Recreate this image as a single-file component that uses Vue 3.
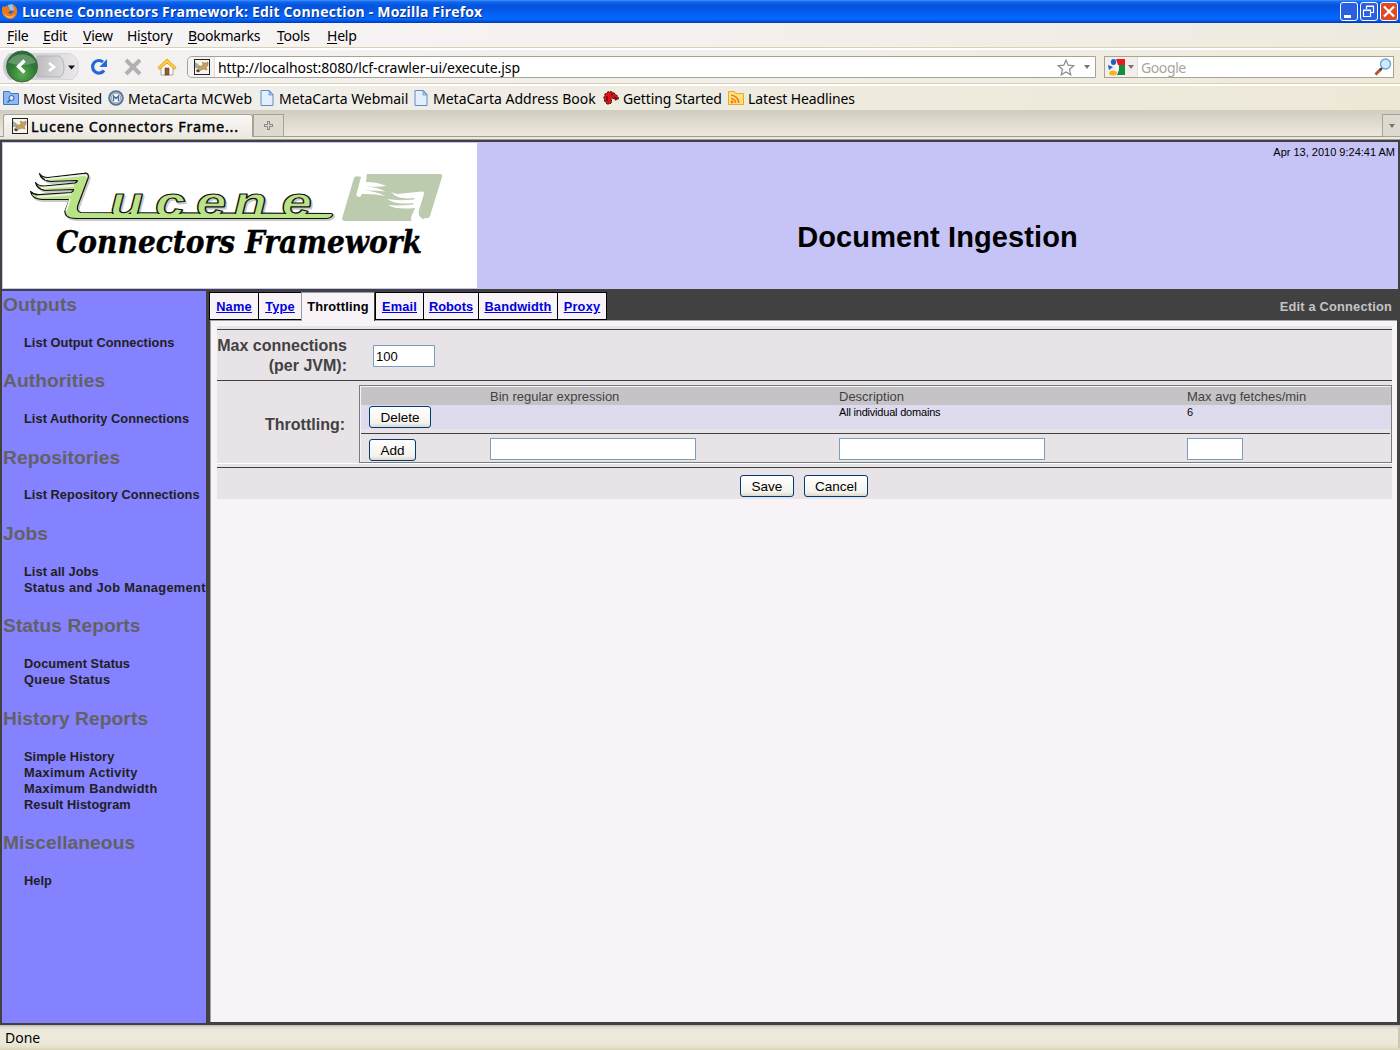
<script setup>
const menus = [
  ['', 'F', 'ile'], ['', 'E', 'dit'], ['', 'V', 'iew'], ['Hi', 's', 'tory'],
  ['', 'B', 'ookmarks'], ['', 'T', 'ools'], ['', 'H', 'elp'],
]
const sections = [
  { title: 'Outputs', links: ['List Output Connections'] },
  { title: 'Authorities', links: ['List Authority Connections'] },
  { title: 'Repositories', links: ['List Repository Connections'] },
  { title: 'Jobs', links: ['List all Jobs', 'Status and Job Management'] },
  { title: 'Status Reports', links: ['Document Status', 'Queue Status'] },
  { title: 'History Reports', links: ['Simple History', 'Maximum Activity', 'Maximum Bandwidth', 'Result Histogram'] },
  { title: 'Miscellaneous', links: ['Help'] },
]
const loose = ['Status and Job Management', 'Queue Status', 'Maximum Activity', 'Maximum Bandwidth']
const tabs = ['Name', 'Type', 'Throttling', 'Email', 'Robots', 'Bandwidth', 'Proxy']
</script>

<template>
  <div class="window">
    <header class="titlebar">
      <svg class="fx" width="16" height="18" viewBox="0 0 16 18">
        <circle cx="8" cy="9" r="7" fill="#2b62b8" />
        <path d="M6 3l4-1 4 4-3 3-4-1z" fill="#8cc6f4" />
        <path d="M1 4l2 1 2-2 1 3 3 2-3 3c3 2 6 0 6-4l-2-5c4 2 6 5 5 9-1 4-4 6-7 6C3 16 0 13 0 9c0-2 0-4 1-5z" fill="#ec7a1c" />
        <path d="M2 11c2 4 7 5 11 1-2 5-9 6-11-1z" fill="#ffc23c" />
      </svg>
      <span class="wtitle">Lucene Connectors Framework: Edit Connection - Mozilla Firefox</span>
      <div class="wbtns">
        <svg width="18" height="19" viewBox="0 0 18 19"><rect x=".5" y=".5" width="17" height="18" rx="2.5" fill="#2a5fe0" stroke="#fff" /><path d="M4 13h7v3H4z" fill="#fff" /></svg>
        <svg width="18" height="19" viewBox="0 0 18 19"><rect x=".5" y=".5" width="17" height="18" rx="2.5" fill="#2a5fe0" stroke="#fff" /><path d="M6.500 7V4.500h7v6H11M6 4h8M3.500 8.500h7v6h-7zM3 8h8" fill="none" stroke="#fff" stroke-width="1.200" /></svg>
        <svg width="18" height="19" viewBox="0 0 18 19"><rect x=".5" y=".5" width="17" height="18" rx="2.5" fill="#dc4a26" stroke="#fff" /><path d="M4 4.500l10 10M14 4.500l-10 10" stroke="#fff" stroke-width="2.200" /></svg>
      </div>
    </header>

    <nav class="menubar">
      <span v-for="(m, i) in menus" :key="i" class="menu">{{ m[0] }}<u>{{ m[1] }}</u>{{ m[2] }}</span>
    </nav>

    <div class="navbar">
      <svg class="backfwd" width="78" height="34" viewBox="0 0 78 34">
        <defs>
          <radialGradient id="gb" cx=".5" cy=".75" r=".7"><stop offset="0" stop-color="#58b04e" /><stop offset=".6" stop-color="#2f7a36" /><stop offset="1" stop-color="#2c6a38" /></radialGradient>
          <linearGradient id="gf" x2="1"><stop offset="0" stop-color="#bdbdbf" /><stop offset="1" stop-color="#dcdbde" /></linearGradient>
          <linearGradient id="gp" x2="1"><stop offset="0" stop-color="#c9c8cb" /><stop offset=".7" stop-color="#dddbdf" /><stop offset="1" stop-color="#ebe8ec" /></linearGradient>
        </defs>
        <path d="M8 3.500h61q5 2 8 8v10q-2 6-6 8H8q-6-6-6-13t6-13z" fill="url(#gp)" stroke="#d6d4d8" />
        <path d="M36 6h22q5 3 5 11t-4 10H36z" fill="url(#gf)" stroke="#b4b3b6" />
        <path d="M48 13l5 4-5 4" fill="none" stroke="#fff" stroke-width="2.500" />
        <circle cx="21" cy="16.500" r="15.500" fill="url(#gb)" stroke="#47634a" />
        <path d="M7 12.500a15 13 0 0 1 28 0Q21 17.500 7 12.500z" fill="#fff" opacity=".25" />
        <path d="M23.500 10.500l-6 6 6 6" fill="none" stroke="#fff" stroke-width="3.400" />
        <path d="M67 15.500h7l-3.500 4z" fill="#111" />
      </svg>
      <svg class="reload" width="18" height="18" viewBox="0 0 18 18"><path d="M14 12.500A6.300 6.300 0 1 1 13 4" fill="none" stroke="#2468dc" stroke-width="3.200" /><path d="M17 1v8H9.500z" fill="#2468dc" /></svg>
      <svg class="stop" width="18" height="18" viewBox="0 0 18 18"><path d="M2 2l14 14M16 2L2 16" stroke="#b1b1b1" stroke-width="4" /></svg>
      <svg class="home" width="20" height="18" viewBox="0 0 20 18">
        <path d="M4 9v8h12V9l-6-6z" fill="#fdfdfd" stroke="#a8a8a8" />
        <path d="M8 10h4v7H8z" fill="#9a5a26" stroke="#5f4020" stroke-width=".6" />
        <path d="M10 1L1 9.500l1.500 1.800L10 5l7.500 6.300L19 9.500z" fill="#ffcf3f" stroke="#e0a01e" />
      </svg>
      <div class="url">
        <span class="favbox">
          <svg width="16" height="16" viewBox="0 0 16 16"><rect x=".5" y=".5" width="15" height="15" fill="#f7f4ec" stroke="#222" /><path d="M1 3l3 2 4 4H1z" fill="#6c7a68" opacity=".6" /><path d="M2.500 12.500c1.500-4 3.500-6 6.500-6L8.500 3l1.500 1h2l2-1v3.500l-2 1.500 1 3-3-1-3 1-2 1.500z" fill="#c9a060" stroke="#8a6c38" stroke-width=".5" /><path d="M2 11l2-.5 2 1.500-2 1.500z" fill="#444" /></svg>
        </span>
        <span class="urltext">http://localhost:8080/lcf-crawler-ui/execute.jsp</span>
        <svg class="star" width="18" height="17" viewBox="0 0 18 17"><path d="M9 1.200l2.200 5 5.500.5-4.200 3.600 1.300 5.500L9 12.900l-4.800 2.900 1.300-5.500L1.300 6.700l5.500-.5z" fill="#fff" stroke="#8a8a8a" stroke-width="1.200" /></svg>
        <i class="arrow"></i>
      </div>
      <div class="search">
        <span class="engine">
          <svg width="17" height="17" viewBox="0 0 17 17">
            <path d="M8 0h9v6h-7z" fill="#e8191c" /><path d="M11 6h6v10H9l2-5z" fill="#0f8f3c" />
            <ellipse cx="5.500" cy="3" rx="2.600" ry="3" fill="#1d5fc4" /><path d="M0 6l5 2-4 3z" fill="#1d5fc4" />
            <path d="M7 6l3 4-3 2" fill="none" stroke="#fff" stroke-width="1.500" /><ellipse cx="5" cy="14" rx="3.800" ry="2.500" fill="#f4b41a" />
          </svg>
          <i class="arrow"></i>
        </span>
        <span class="ph">Google</span>
        <svg class="mag" width="18" height="18" viewBox="0 0 18 18"><path d="M1.500 16.500L7 11" stroke="#b0562a" stroke-width="3" /><path d="M6 12l2.500-2.500" stroke="#333" stroke-width="2" /><circle cx="11.500" cy="6" r="5" fill="#cfeafc" stroke="#6f9fd2" stroke-width="1.400" /></svg>
      </div>
    </div>

    <div class="bookmarks">
      <span class="bm b1">
        <svg width="16" height="16" viewBox="0 0 16 16"><path d="M.5 14.500v-13h6l1 2h8v11z" fill="#8fbaf0" stroke="#3f76c8" /><circle cx="8.500" cy="8" r="2.500" fill="#d8ebff" stroke="#2b5cb0" /><path d="M4.500 12.500l2.500-2.500" stroke="#2b5cb0" stroke-width="1.500" /></svg>
        <span>Most Visited</span>
      </span>
      <span class="bm b2">
        <svg width="16" height="16" viewBox="0 0 16 16"><circle cx="8" cy="8" r="6.800" fill="#e8eef4" stroke="#54779c" stroke-width="2" /><circle cx="8" cy="8" r="4.800" fill="#f8f8f8" stroke="#9c9c9c" /><path d="M5.500 11V6l2.500 2.500L10.500 6v5" fill="none" stroke="#4c6c94" stroke-width="1.400" /></svg>
        <span>MetaCarta MCWeb</span>
      </span>
      <span class="bm b3">
        <svg width="14" height="16" viewBox="0 0 14 16"><path d="M1 .5h8.500l3.500 4v11H1z" fill="#e2effc" stroke="#5c8cc8" /><path d="M9 1v4h4z" fill="#aacbf2" stroke="#5c8cc8" stroke-width=".7" /></svg>
        <span>MetaCarta Webmail</span>
      </span>
      <span class="bm b4">
        <svg width="14" height="16" viewBox="0 0 14 16"><path d="M1 .5h8.500l3.500 4v11H1z" fill="#e2effc" stroke="#5c8cc8" /><path d="M9 1v4h4z" fill="#aacbf2" stroke="#5c8cc8" stroke-width=".7" /></svg>
        <span>MetaCarta Address Book</span>
      </span>
      <span class="bm b5">
        <svg width="16" height="16" viewBox="0 0 16 16"><path d="M4.500 14L2 12 .8 8 2 4l3.500-2.500 4 .5L13 4.500l2.500 3-.5 2-3 .5-2-2-2 1 1 3-2 2z" fill="#d6151b" stroke="#1a0505" stroke-dasharray="2 1.500" /><path d="M8 4l2 1M11 7.500l3 .5M4 6v5" stroke="#300" /></svg>
        <span>Getting Started</span>
      </span>
      <span class="bm b6">
        <svg width="16" height="16" viewBox="0 0 16 16"><path d="M.5 14.500v-13h6l1 2h8v11z" fill="#ffe07a" stroke="#e2aa30" /><circle cx="4" cy="12" r="1.400" fill="#ea7a1c" /><path d="M3 8.500a4.500 4.500 0 0 1 4.500 4.500M3 5.200A7.800 7.800 0 0 1 10.800 13" fill="none" stroke="#ea7a1c" stroke-width="1.600" /></svg>
        <span>Latest Headlines</span>
      </span>
    </div>

    <div class="tabstrip">
      <div class="btab">
        <svg width="16" height="16" viewBox="0 0 16 16"><rect x=".5" y=".5" width="15" height="15" fill="#f7f4ec" stroke="#222" /><path d="M1 3l3 2 4 4H1z" fill="#6c7a68" opacity=".6" /><path d="M2.500 12.500c1.500-4 3.500-6 6.500-6L8.500 3l1.500 1h2l2-1v3.500l-2 1.500 1 3-3-1-3 1-2 1.500z" fill="#c9a060" stroke="#8a6c38" stroke-width=".5" /><path d="M2 11l2-.5 2 1.500-2 1.500z" fill="#444" /></svg>
        <span>Lucene Connectors Frame...</span>
      </div>
      <div class="newtab"><svg width="9" height="9" viewBox="0 0 9 9"><path d="M4.500 0v9M0 4.500h9" stroke="#8b8a86" stroke-width="3" /><path d="M4.500 1v7M1 4.500h7" stroke="#dedbd4" /></svg></div>
      <div class="alltabs"><i class="arrow"></i></div>
    </div>

    <main class="page">
      <div class="banner">
        <svg class="logo" width="474" height="145" viewBox="3 143 474 145">
          <defs>
            <path id="wing" d="M39.500 173.500Q42 177.500 48 177.500L84 173.300Q89.500 172.500 88 178.500L78 205Q76 211.500 81 212.500L331 213.500Q334 214 332 216Q330 218.500 326 218.500H76Q64 218 65 211L69.500 199.500H42Q32 199 30.500 191.500Q34 195 39 194.700L71 192.500Q74 191 73.500 189.500L45 190.500Q37 189 35.500 182.500Q38 186 44 186L75 183Q78 181.500 77 180.500L50 181.500Q41 180 39.500 173.500Z" />
          </defs>
          <g stroke-linejoin="round">
            <use href="#wing" x="1.500" y="1.800" fill="#c9c9c9" stroke="#c9c9c9" stroke-width="1.500" />
            <text class="word shade" transform="translate(1.500 1.500) scale(1.3 1)" x="84.600 119.200 150.800 179.600 216.500" y="217.500">ucene</text>
            <use href="#wing" fill="#b9e387" stroke="#111" stroke-width="1.200" />
            <path d="M45 179.400l39-4.200q3-.4 2.500 2M41 188l33-2.500M37 196.800l34-2.500M70 199l-4 12" fill="none" stroke="#f2f2ee" stroke-width="1.800" />
            <text class="word" transform="scale(1.3 1)" x="84.600 119.200 150.800 179.600 216.500" y="217.500">ucene</text>
            <path d="M84 214.100h245l-2 3.800H84z" fill="#b9e387" />
          </g>
          <text class="sub" x="56" y="253" textLength="366" lengthAdjust="spacingAndGlyphs">Connectors Framework</text>
          <path d="M361 174H440Q442.500 174 442 177L430 216Q429 219 425 218L419 221H345Q341 221 342.500 217L354 178Q355 175 361 177Z" fill="#bccaad" />
          <path d="M361 173H367L366 182Q378 182 386 186Q380 187 365 186.500Q378 187 385 191.500Q376 190 364 190.500Q376 191 385 196Q374 193.500 362 194L360 197Q356 197 356.500 194L361 177Z" fill="#fff" />
          <path d="M391 191.500Q394 195 402 193.500L422 191.500Q424.500 192 424 194L419 210Q418 216 421 217.500L426 222H412Q410 219 411.500 216L415 208Q396 210 388 205Q398 206 413 204.500L413.500 203Q396 205 387 199Q398 201 414 199.500L414.500 198Q396 200 391 191.500Z" fill="#fff" />
        </svg>
        <div class="bannertext">
          <div class="date">Apr 13, 2010 9:24:41 AM</div>
          <h1>Document Ingestion</h1>
        </div>
      </div>
      <div class="body">
        <aside class="side">
          <section v-for="s in sections" :key="s.title">
            <h2>{{ s.title }}</h2>
            <a v-for="l in s.links" :key="l" :class="{ loose: loose.includes(l) }">{{ l }}</a>
          </section>
        </aside>
        <div class="content">
          <div class="tabrow">
            <div v-for="t in tabs" :key="t" class="tab" :class="['t-' + t.toLowerCase(), { active: t === 'Throttling' }]"><span>{{ t }}</span></div>
            <div class="where">Edit a Connection</div>
          </div>
          <div class="panel">
            <div class="form">
              <div class="row r1">
                <div class="label">Max connections<br />(per JVM):</div>
                <div class="inp w100">100</div>
              </div>
              <div class="row r2">
                <div class="label lt">Throttling:</div>
                <div class="table">
                  <div class="trow thead"><span></span><span>Bin regular expression</span><span>Description</span><span>Max avg fetches/min</span></div>
                  <div class="trow item"><span><b class="btn del">Delete</b></span><span></span><span>All individual domains</span><span>6</span></div>
                  <div class="sep"></div>
                  <div class="trow add"><span><b class="btn addb">Add</b></span><span><i class="inp wide"></i></span><span><i class="inp wide"></i></span><span><i class="inp small"></i></span></div>
                </div>
              </div>
              <div class="row r3">
                <b class="btn save">Save</b>
                <b class="btn cancel">Cancel</b>
              </div>
            </div>
          </div>
        </div>
      </div>
    </main>
    <footer class="status"><span>Done</span><i></i></footer>
  </div>
</template>

<style>
body { background: #ece9d8; overflow: hidden; }
</style>

<style scoped>
* { box-sizing: border-box; }
svg { display: block; flex: none; }
.window { width: 1400px; height: 1050px; display: flex; flex-direction: column; font-family: "Noto Sans", sans-serif; color: #000; overflow: hidden; white-space: nowrap; }
.titlebar { height: 23px; flex: none; display: flex; align-items: center; padding: 0 2px 0 2px; background: linear-gradient(#3f93ff 0, #1064ec 2px, #0453dc 6px, #0462f8 15px, #0468ff 19px, #0048d0 22px, #0038b0 23px); }
.fx { margin-top: -2px; }
.wtitle { margin-left: 4px; color: #fff; font: bold 14px/23px "Open Sans", sans-serif; text-shadow: 1px 1px #0a2a80; letter-spacing: 0.18px; }
.wbtns { margin-left: auto; display: flex; gap: 2px; margin-top: -1px; }
.menubar { height: 27px; flex: none; display: grid; grid-template-columns: 36px 40px 44px 61px 89px 50px 40px; padding-left: 7px; background: linear-gradient(90deg, #f7f4f6, #f4f1ee 50%, #edeade); border-bottom: 2px solid #fff; box-shadow: inset 0 -1px #dccfb2; font-size: 14px; line-height: 25px; }
.menu { letter-spacing: -0.25px; }
.menu u { text-underline-offset: 2px; }
.navbar { height: 36px; flex: none; display: flex; align-items: center; background: linear-gradient(90deg, #f4f2f2, #f2eee8 60%, #efead8); border-bottom: 2px solid #fff; box-shadow: inset 0 -1px #dccfb2; }
.backfwd { margin-left: 1px; }
.reload { margin-left: 11px; }
.stop { margin-left: 16px; }
.home { margin-left: 15px; }
.url { margin-left: 10px; width: 909px; height: 22px; display: flex; align-items: center; background: #fff; border: 1px solid #a6a294; border-radius: 5px 0 0 5px; }
.favbox { display: flex; align-items: center; width: 27px; height: 20px; padding-left: 6px; border-right: 1px solid #ddd; background: #f5f2f3; border-radius: 5px 0 0 5px; }
.urltext { margin-left: 3px; font-size: 14px; letter-spacing: -0.07px; }
.star { margin-left: auto; }
.arrow { width: 0; height: 0; border: 3px solid transparent; border-top: 4px solid #77756f; border-bottom: 0; }
.url .arrow { margin: 0 5px 0 9px; }
.search { margin-left: 8px; width: 290px; height: 22px; display: flex; align-items: center; background: #fff; border: 1px solid #a6a294; }
.engine { width: 33px; height: 20px; padding-left: 3px; display: flex; align-items: center; gap: 3px; background: #f2eeee; border-right: 1px solid #e2e0dc; }
.ph { margin-left: 3px; font-size: 14px; color: #a8a598; letter-spacing: -0.4px; }
.mag { margin-left: auto; margin-right: 1px; }
.bookmarks { height: 24px; flex: none; display: flex; padding-left: 3px; background: linear-gradient(90deg, #f2f0ee, #eeebe0 50%, #ede8d6); font-size: 14px; line-height: 26px; letter-spacing: -0.12px; }
.bm { display: flex; align-items: flex-start; }
.bm svg { margin: 4px 4px 0 0; }
.b1 { width: 105px; }
.b2 { width: 152px; letter-spacing: 0.05px; }
.b3 { width: 154px; letter-spacing: -0.04px; }
.b4 { width: 189px; letter-spacing: 0; }
.b3 svg, .b4 svg { margin-right: 5px; }
.b5 { width: 125px; }
.tabstrip { height: 30px; flex: none; display: flex; align-items: flex-start; padding: 4px 0 0 3px; background: linear-gradient(#cfccc0 0, #ddd8cc 10px, #ebe4d8 22px, #ece6da 26px, #9e9b92 26px, #9e9b92 27px, #ece9e0 27px, #ece9e0 29px, #9e9b92 29px); }
.btab { width: 250px; height: 23px; display: flex; align-items: center; padding-left: 8px; background: linear-gradient(#faf8f6, #ece8e2); border: 1px solid #a6a294; border-bottom: 0; border-radius: 3px 3px 0 0; font-size: 14.5px; -webkit-text-stroke: 0.4px #000; letter-spacing: 0.72px; }
.btab span { margin-left: 3px; line-height: 22px; }
.newtab { width: 31px; height: 23px; display: flex; align-items: center; justify-content: center; border: 1px solid #a6a294; background: #dedad0; }
.alltabs { margin-left: auto; width: 18px; height: 23px; border: 1px solid #a6a294; border-right: 0; background: #dedad0; display: flex; align-items: center; justify-content: center; }

.page { height: 885px; flex: none; background: #424142; padding: 2px 2px 2px 2px; font-family: "Liberation Sans", sans-serif; display: flex; flex-direction: column; }
.banner { height: 147px; flex: none; display: flex; background: #c6c3f7; padding: 1px 0 1px 1px; }
.logo { background: #fff; width: 474px; height: 145px; }
.word { font: italic bold 42px "Liberation Sans", sans-serif; fill: #b9e387; stroke: #111; stroke-width: 1.1px; }
.word.shade { fill: #c9c9c9; stroke: #c9c9c9; }
.sub { font: italic bold 31px "DejaVu Serif Condensed", "DejaVu Serif", serif; fill: #000; stroke: #000; stroke-width: 0.4px; }
.bannertext { flex: 1; display: flex; flex-direction: column; }
.date { text-align: right; padding-right: 3px; font-size: 11px; line-height: 18px; }
h1 { margin: 59px 0 0; font-size: 29px; line-height: 34px; text-align: center; letter-spacing: 0.1px; }
.body { flex: 1; min-height: 0; display: flex; padding-top: 2px; }
.side { width: 204px; flex: none; background: #8482ff; padding: 3px 0 0 1px; font-weight: bold; font-size: 12.8px; line-height: 16px; overflow: hidden; }
.side section { margin-bottom: 19.55px; }
.side h2 { margin: 0 0 18.8px; font-size: 19.2px; line-height: 22px; color: #636163; letter-spacing: 0.08px; }
.side a { display: block; padding-left: 21px; color: #212021; letter-spacing: 0.05px; }
.side a.loose { letter-spacing: 0.33px; }
.content { margin-left: 3px; flex: 1; min-width: 0; display: flex; flex-direction: column; padding-bottom: 1px; }
.tabrow { height: 30px; flex: none; display: flex; padding-top: 1px; font-weight: bold; font-size: 12.8px; line-height: 27px; position: relative; z-index: 1; }
.tab { height: 28px; border: 1px solid #000; border-right: 0; background: #f7f3f7; color: #0000de; text-align: center; letter-spacing: 0.2px; }
.tab span { text-decoration: underline; }
.tab.active { height: 29px; border: 1px solid #9c9a9c; border-right: 1px solid #424142; border-bottom: 0; color: #000; line-height: 28px; }
.tab.active span { text-decoration: none; }
.t-name { width: 49px; }
.t-type { width: 43px; }
.t-throttling { width: 74px; }
.t-email { width: 48px; }
.t-robots { width: 55px; letter-spacing: 0; }
.t-bandwidth { width: 79px; }
.t-proxy { width: 50px; border-right: 1px solid #000; }
.where { margin-left: auto; padding-right: 6px; color: #c6c3c6; line-height: 29px; letter-spacing: 0.2px; }
.panel { flex: 1; margin: -1px 1px 0 1px; background: #f7f3f7; border-top: 1px solid #a5a2a5; border-left: 1px solid #a5a2a5; padding: 5px 5px 0 6px; }
.form { background: #e7e3e7; height: 173px; padding-top: 3px; }
.row { border-top: 1px solid #424142; display: flex; }
.r1 { height: 51px; align-items: flex-start; }
.label { width: 130px; margin-top: 6px; text-align: right; font-weight: bold; font-size: 16px; line-height: 20px; color: #424142; }
.label.lt { width: 128px; margin-top: 34px; }
.inp { display: block; height: 22px; border: 1px solid #7b9ebd; background: #fff; font-size: 13px; line-height: 21px; padding-left: 2px; }
.w100 { width: 62px; margin: 15px 0 0 26px; }
.r2 { height: 87px; box-shadow: inset 0 -3px #e7e3e7, inset 0 -4px #fff; }
.table { flex: none; margin: 4px 0 0 14px; width: 1033px; height: 78px; border: 1px solid #7b7d7b; box-shadow: inset 1px 1px #f7f3f7, 0 1px #fff; padding: 1px 0 0 1px; }
.trow { display: grid; grid-template-columns: 129px 349px 348px 1fr; }
.thead { height: 18px; background: #c6c3c6; color: #424142; font-size: 13px; line-height: 19px; }
.item { height: 24px; background: #dedbef; font-size: 11px; line-height: 15px; letter-spacing: -0.2px; }
.sep { height: 5px; margin-right: 1px; border-bottom: 1px solid #424142; }
.trow .inp { margin-top: 4px; }
.wide { width: 206px; }
.small { width: 56px; }
.btn { display: block; height: 22px; border: 1px solid #003c74; border-radius: 3px; background: linear-gradient(#fff, #f4f2ec 80%, #dcd7cc); font: 13.5px/21px "Liberation Sans", sans-serif; letter-spacing: 0; text-align: center; }
.item .btn { margin: 1px 0 0 8px; }
.add .btn { margin: 5px 0 0 8px; }
.del { width: 62px; }
.addb { width: 47px; }
.r3 { padding: 7px 0 0 523px; gap: 10px; }
.save { width: 54px; }
.cancel { width: 64px; }
.status { flex: 1; display: flex; align-items: center; background: linear-gradient(#b8b5aa 0, #dedbd0 2px, #ece9dc 5px, #ede9da 18px, #e8e2c8 22px, #d8d2bc 25px); font-size: 14px; padding-left: 5px; }
.status i { margin-left: auto; width: 2px; height: 21px; background: #cdc8b4; }
</style>
